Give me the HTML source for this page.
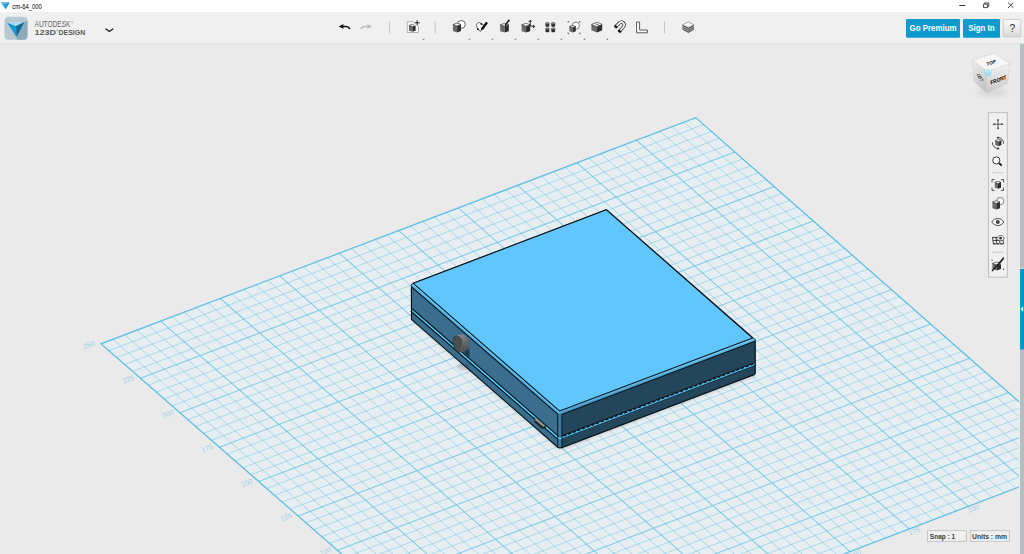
<!DOCTYPE html>
<html><head><meta charset="utf-8"><title>cm-64_000</title>
<style>
html,body{margin:0;padding:0;background:#eaeaea;overflow:hidden;font-family:"Liberation Sans",sans-serif;}
svg{position:absolute;left:0;top:0;display:block}
</style></head><body>
<svg width="1024" height="554" viewBox="0 0 1024 554" font-family="Liberation Sans, sans-serif">
<defs><filter id="blur1" x="-0.3" y="-0.3" width="1.6" height="1.6"><feGaussianBlur stdDeviation="1.2"/></filter><linearGradient id="btn" x1="0" y1="0" x2="0.3" y2="1"><stop offset="0" stop-color="#8a8d8f"/><stop offset="0.5" stop-color="#6d7072"/><stop offset="1" stop-color="#4e5153"/></linearGradient><linearGradient id="fl" gradientUnits="userSpaceOnUse" x1="486" y1="347" x2="483.4" y2="350"><stop offset="0" stop-color="#6ed2ff"/><stop offset="1" stop-color="#3f95c9"/></linearGradient><linearGradient id="fr" gradientUnits="userSpaceOnUse" x1="656" y1="374.6" x2="657.4" y2="378.4"><stop offset="0" stop-color="#72d4ff"/><stop offset="1" stop-color="#3a88ba"/></linearGradient><linearGradient id="vf" x1="0" y1="0" x2="1" y2="0"><stop offset="0" stop-color="#2d6488"/><stop offset="0.5" stop-color="#3f83ad"/><stop offset="1" stop-color="#2a5e80"/></linearGradient><linearGradient id="ncl" x1="0" y1="0" x2="0.3" y2="1"><stop offset="0" stop-color="#eeeeee"/><stop offset="1" stop-color="#c6c6c6"/></linearGradient><linearGradient id="ncf" x1="0" y1="0" x2="0" y2="1"><stop offset="0" stop-color="#f2f2f2"/><stop offset="1" stop-color="#c8c8c8"/></linearGradient><linearGradient id="hg" x1="0" y1="0" x2="0" y2="1"><stop offset="0" stop-color="#fbfbfb"/><stop offset="1" stop-color="#dadada"/></linearGradient><filter id="blur2" x="-0.2" y="-0.2" width="1.4" height="1.4"><feGaussianBlur stdDeviation="3"/></filter><clipPath id="vp"><rect x="0" y="44" width="1020" height="510"/></clipPath></defs>
<rect x="0" y="0" width="1024" height="554" fill="#eaeaea"/>

<g clip-path="url(#vp)">
<path d="M494.71,687.58 L1086.55,461.08 L695.73,117.64 L100.95,343.82Z" fill="#e7eef1"/>
<path d="M506.58,683.03 L112.88,339.29 M486.86,680.72 L1078.76,454.23 M518.45,678.49 L124.81,334.75 M479.01,673.87 L1070.96,447.38 M530.32,673.95 L136.74,330.21 M471.15,667.01 L1063.17,440.53 M542.19,669.41 L148.66,325.68 M463.30,660.15 L1055.37,433.68 M565.91,660.33 L172.51,316.61 M447.59,646.43 L1039.78,419.98 M577.78,655.79 L184.43,312.08 M439.73,639.58 L1031.98,413.12 M589.64,651.25 L196.35,307.54 M431.87,632.71 L1024.18,406.27 M601.50,646.71 L208.27,303.01 M424.01,625.85 L1016.38,399.41 M625.21,637.63 L232.10,293.95 M408.29,612.13 L1000.77,385.70 M637.07,633.10 L244.02,289.42 M400.43,605.26 L992.97,378.84 M648.92,628.56 L255.93,284.89 M392.56,598.40 L985.17,371.98 M660.77,624.02 L267.84,280.36 M384.70,591.53 L977.36,365.13 M684.47,614.95 L291.66,271.30 M368.97,577.80 L961.75,351.40 M696.32,610.42 L303.57,266.77 M361.10,570.93 L953.94,344.54 M708.17,605.89 L315.47,262.25 M353.23,564.06 L946.13,337.68 M720.02,601.35 L327.38,257.72 M345.36,557.19 L938.32,330.82 M743.70,592.29 L351.18,248.67 M329.62,543.45 L922.69,317.09 M755.55,587.76 L363.08,244.14 M321.75,536.58 L914.88,310.22 M767.39,583.22 L374.98,239.62 M313.88,529.71 L907.07,303.36 M779.22,578.69 L386.88,235.09 M306.01,522.83 L899.25,296.49 M802.90,569.63 L410.67,226.04 M290.25,509.08 L883.62,282.75 M814.73,565.10 L422.56,221.52 M282.38,502.21 L875.80,275.88 M826.57,560.58 L434.45,217.00 M274.50,495.33 L867.98,269.01 M838.40,556.05 L446.34,212.48 M266.62,488.45 L860.16,262.14 M862.06,546.99 L470.12,203.43 M250.86,474.69 L844.52,248.39 M873.89,542.47 L482.01,198.91 M242.98,467.81 L836.70,241.52 M885.71,537.94 L493.89,194.39 M235.10,460.93 L828.87,234.64 M897.54,533.42 L505.78,189.88 M227.22,454.05 L821.05,227.77 M921.18,524.37 L529.54,180.84 M211.45,440.28 L805.40,214.01 M933.00,519.84 L541.42,176.32 M203.56,433.40 L797.57,207.13 M944.82,515.32 L553.30,171.80 M195.67,426.51 L789.74,200.26 M956.64,510.80 L565.17,167.29 M187.78,419.63 L781.91,193.38 M980.27,501.75 L588.92,158.26 M172.01,405.85 L766.25,179.61 M992.09,497.23 L600.80,153.74 M164.12,398.96 L758.42,172.73 M1003.90,492.71 L612.67,149.23 M156.22,392.07 L750.59,165.85 M1015.71,488.19 L624.54,144.71 M148.33,385.18 L742.75,158.96 M1039.33,479.15 L648.27,135.69 M132.54,371.40 L727.08,145.19 M1051.14,474.63 L660.14,131.17 M124.65,364.51 L719.24,138.31 M1062.94,470.11 L672.00,126.66 M116.75,357.61 L711.41,131.42 M1074.75,465.60 L683.87,122.15 M108.85,350.72 L703.57,124.53" stroke="#2cb0e2" stroke-opacity="0.33" stroke-width="1" fill="none"/>
<path d="M554.05,664.87 L160.59,321.14 M455.44,653.29 L1047.58,426.83 M613.35,642.17 L220.19,298.48 M416.15,618.99 L1008.58,392.56 M672.62,619.49 L279.75,275.83 M376.83,584.67 L969.55,358.27 M731.86,596.82 L339.28,253.19 M337.49,550.32 L930.51,323.95 M791.06,574.16 L398.77,230.57 M298.13,515.96 L891.44,289.62 M850.23,551.52 L458.23,207.96 M258.74,481.57 L852.34,255.27 M909.36,528.89 L517.66,185.36 M219.33,447.17 L813.22,220.89 M968.46,506.27 L577.05,162.77 M179.90,412.74 L774.08,186.49 M1027.52,483.67 L636.41,140.20 M140.44,378.29 L734.92,152.08" stroke="#2cb0e2" stroke-opacity="0.55" stroke-width="1.05" fill="none"/>
<path d="M494.71,687.58 L1086.55,461.08 L695.73,117.64 L100.95,343.82Z" stroke="#2cb0e2" stroke-opacity="0.74" stroke-width="1.25" fill="none"/>
<g font-family="Liberation Sans, sans-serif" font-size="7.1" fill="#9dd2e9"><text x="325.5" y="553.8" transform="rotate(-21 325.5 551.5)" text-anchor="middle">100</text><text x="286.1" y="519.5" transform="rotate(-21 286.1 517.2)" text-anchor="middle">125</text><text x="246.7" y="485.1" transform="rotate(-21 246.7 482.8)" text-anchor="middle">150</text><text x="207.3" y="450.7" transform="rotate(-21 207.3 448.4)" text-anchor="middle">175</text><text x="167.9" y="416.2" transform="rotate(-21 167.9 413.9)" text-anchor="middle">200</text><text x="128.4" y="381.8" transform="rotate(-21 128.4 379.5)" text-anchor="middle">225</text><text x="89.0" y="347.3" transform="rotate(-21 89.0 345.0)" text-anchor="middle">250</text><text x="855.2" y="556.2" transform="rotate(-21 855.2 553.9)" text-anchor="middle">150</text><text x="914.4" y="533.6" transform="rotate(-21 914.4 531.3)" text-anchor="middle">175</text><text x="973.5" y="511.0" transform="rotate(-21 973.5 508.7)" text-anchor="middle">200</text></g>
</g>

<!-- BOX -->
<g id="box" stroke-linejoin="round">
  <!-- ground shadow -->
  <path d="M412,321 L559,449 L590,438 L520,400 Z" fill="#000" opacity="0.10" filter="url(#blur2)"/><path d="M562,449.6 L756,376.6 L754,372 L562,444 Z" fill="#000" opacity="0.10" filter="url(#blur1)"/>
  <!-- left face -->
  <path d="M411.4,285 L413.3,283.3 L558,413.6 L558.2,447.6 L411.6,319.6 Z" fill="#3a6d8e"/>
  <!-- right face -->
  <path d="M558.5,413.5 L755.2,339.9 L755.2,373.4 L754.2,374.6 L561.8,447.6 L559,447.9 Z" fill="#24465b"/>
  <!-- vertical fillet front -->
  <path d="M557.7,413.6 L562,414 L562,447 L560,448 L557.7,446.6 Z" fill="url(#vf)"/>
  <!-- seams -->
  <path d="M411.6,310 L557.9,437.6" stroke="#0a151c" stroke-width="3.8" fill="none"/>
  <path d="M411.6,310 L557.9,437.6 Q560,439 562,438" stroke="#5cd0ff" stroke-width="1.5" fill="none"/>
  <path d="M561.8,437.2 L755.2,363.8" stroke="#0a151c" stroke-width="3.4" fill="none"/>
  <path d="M561.8,437.9 L755.2,364.5" stroke="#55c2f5" stroke-width="1.1" fill="none"/>
  <path d="M561.8,437 L755.2,363.6" stroke="#55c2f5" stroke-width="1.2" stroke-dasharray="1.8 3.2" fill="none"/>
  <!-- silhouette -->
  <path d="M411.4,285 L413.3,283.3 L606.4,209.8 L755.2,339.9 L755.2,373.4 L754.2,374.6 L561.8,447.6 L559.6,448 L557.8,447.2 L411.6,319.6 Z" fill="none" stroke="#0b161d" stroke-width="1.25"/>
  <!-- fillet bands -->
  <path d="M413.3,283.3 L559.7,411.1 L557.7,414.1 L411.6,286.8 L411.5,285 Z" fill="url(#fl)"/>
  <path d="M559.7,411.1 L752.6,338 L755.2,339.9 L755,341.3 L561.8,414.4 L557.7,414.1 Z" fill="url(#fr)"/>
  <path d="M411.6,286.8 L557.7,414.1" stroke="#0b161d" stroke-width="1.1" fill="none"/>
  <path d="M561.8,414.4 L755,341.3" stroke="#0b161d" stroke-width="1.1" fill="none"/>
  <path d="M557.7,414 L557.7,446.6 M562,414.4 L562,447" stroke="#0b161d" stroke-width="0.9" fill="none"/>
  <!-- top face -->
  <path d="M413.3,283.3 L606.4,209.8 L752.6,338 L559.7,411.1 Z" fill="#61c6fd" stroke="#0b161d" stroke-width="1.05"/>
  <!-- usb port -->
  <path d="M534.4,417.2 L546.4,426.4 L545,428.8 L541.4,428.6 L534.2,421.8 Z" fill="#262626"/>
  <path d="M535,417.7 L545.2,425.7 L543.4,426.7 L535.2,420 Z" fill="#9c9c9c"/>
  <!-- button -->
  <ellipse cx="463" cy="367" rx="6" ry="3.2" fill="#000" opacity="0.13" filter="url(#blur1)"/>
  <path d="M464.6,350.6 L469.4,348.4 L469.4,357.6 L465,353.6 Z" fill="#1d3b4e"/>
  <path d="M455.4,336.8 C458,333.4 466.4,333.2 468.8,340.4 L469.3,349 L461,352.6 Z" fill="url(#btn)"/>
  <ellipse cx="458" cy="343.9" rx="4.7" ry="8.4" transform="rotate(-16 458 343.9)" fill="#4b4e50" stroke="#2c2e30" stroke-width="0.6"/>
  <path d="M461.4,336.8 C463.4,340.6 463.4,347.6 460.6,351.6" stroke="#7d8183" stroke-width="0.7" fill="none"/>
</g>
<!-- RIGHT STRIP -->
<rect x="1019" y="44" width="1" height="510" fill="#ededed"/><rect x="1020" y="44" width="4" height="510" fill="#b5bebe"/>
<rect x="1020" y="268.4" width="4" height="0.8" fill="#e6dcd8"/><rect x="1020" y="269" width="4" height="80.5" fill="#0099cc"/>
<path d="M1023.2,306.6 L1020.4,309 L1023.2,311.4 Z" fill="#fff"/>
<!-- TITLE BAR -->
<rect x="0" y="0" width="1024" height="12" fill="#ffffff"/>
<path d="M1.1,2.2 L9.8,2.2 L5.6,9.3 Z" fill="#1d8fc6"/>
<path d="M1.1,2.2 L5.4,4 L5.6,9.3 Z" fill="#2fb0e6"/><path d="M1.1,2.2 L9.8,2.2 L5.4,4 Z" fill="#7fd0ee"/>
<text x="12.3" y="8.7" font-size="6.8" fill="#000" textLength="29.6" lengthAdjust="spacingAndGlyphs">cm-64_000</text>
<path d="M959.3,5.5 H965.3" stroke="#222" stroke-width="0.9" fill="none"/>
<path d="M983.5,4.1 H987.6 V7.6 H983.5 Z M984.7,4.1 V2.9 H988.8 V6.4 H987.6" stroke="#222" stroke-width="0.8" fill="none"/>
<path d="M1008,2.7 L1013.4,7.9 M1013.4,2.7 L1008,7.9" stroke="#222" stroke-width="0.85" fill="none"/>
<!-- TOOLBAR -->
<rect x="0" y="12" width="1024" height="31" fill="#f0f0f0"/>
<rect x="0" y="42" width="1024" height="1" fill="#f2f2f2"/><rect x="0" y="43" width="1024" height="1" fill="#dedede"/><rect x="0" y="44" width="1019" height="1" fill="#e5e5e5"/>
<!-- logo -->
<rect x="4.5" y="16.8" width="23" height="23" rx="4" fill="#b8c8d0"/>
<path d="M27.5,20 L27.5,35.8 Q27.5,39.8 23.5,39.8 L17,39.8 L14,31 Z" fill="#8eaaba"/>
<path d="M7,22.6 L16,26 L16.6,37 Z" fill="#199ad8"/>
<path d="M7,22.6 L24.4,22 L16,26 Z" fill="#a9dcf1"/>
<path d="M24.4,22 L16,26 L16.6,37 Z" fill="#0f6c9a"/>
<text x="34.5" y="27" font-size="8.2" fill="#666" textLength="36" lengthAdjust="spacingAndGlyphs">AUTODESK</text>
<text x="71" y="23.6" font-size="3" fill="#6a6a6a">®</text>
<text x="34.5" y="35.1" font-size="8.1" font-weight="bold" fill="#5a5a5a" textLength="21.5" lengthAdjust="spacingAndGlyphs">123D</text>
<text x="56.2" y="31.6" font-size="3" fill="#5a5a5a">®</text>
<text x="58.6" y="35.1" font-size="8.1" font-weight="bold" fill="#5a5a5a" textLength="26.6" lengthAdjust="spacingAndGlyphs">DESIGN</text>
<path d="M106,29 L109.4,31.6 L112.8,29" stroke="#222" stroke-width="1.3" fill="none" stroke-linecap="round" stroke-linejoin="round"/>
<!-- buttons right -->
<rect x="906" y="19" width="54" height="18.8" rx="1.2" fill="#0d9bce"/>
<text x="933" y="31.2" font-size="8.2" font-weight="bold" fill="#fff" text-anchor="middle" textLength="47" lengthAdjust="spacingAndGlyphs">Go Premium</text>
<rect x="963" y="19" width="37" height="18.8" rx="1.2" fill="#0d9bce"/>
<text x="981.4" y="31.2" font-size="8.2" font-weight="bold" fill="#fff" text-anchor="middle" textLength="26.4" lengthAdjust="spacingAndGlyphs">Sign In</text>
<rect x="1003.3" y="19.5" width="17.5" height="17.3" rx="1" fill="url(#hg)" stroke="#c4c4c4" stroke-width="0.8"/>
<text x="1012.3" y="32" font-size="10.2" fill="#2a2a2a" text-anchor="middle">?</text>
<!-- SNAP/UNITS -->
<rect x="927.4" y="530.7" width="39" height="10.6" fill="#f0f0f0" stroke="#bdbdbd" stroke-width="0.8"/>
<text x="929.8" y="538.7" font-size="7.5" font-weight="bold" fill="#3c3c3c" textLength="25.4" lengthAdjust="spacingAndGlyphs">Snap : 1</text>
<rect x="970.3" y="530.7" width="39" height="10.6" fill="#f0f0f0" stroke="#bdbdbd" stroke-width="0.8"/>
<text x="972" y="538.7" font-size="7.5" font-weight="bold" fill="#3c3c3c" textLength="35" lengthAdjust="spacingAndGlyphs">Units : mm</text>
<g id="tb"><path d="M338.7,26.4 L343.4,24 L343.4,28.8 Z" fill="#111"/><path d="M343,26.4 H346.4 C348.2,26.4 349,27.4 349.7,28.6" stroke="#111" stroke-width="1.5" fill="none" stroke-linecap="round"/><path d="M372,26.4 L367.3,24 L367.3,28.8 Z" fill="#bcbcbc"/><path d="M367.7,26.4 H364.3 C362.5,26.4 361.7,27.4 361,28.6" stroke="#bcbcbc" stroke-width="1.5" fill="none" stroke-linecap="round"/><path d="M389.5,21 V33.3" stroke="#c6c6c6" stroke-width="1"/><path d="M435.2,21 V33.3" stroke="#c6c6c6" stroke-width="1"/><path d="M664.5,21 V33.3" stroke="#c6c6c6" stroke-width="1"/><rect x="407.2" y="21.8" width="11.2" height="10.6" fill="#f6f6f6" stroke="#9a9a9a" stroke-width="0.7"/><path d="M409.00,25.51 L412.43,26.62 L412.43,31.80 L409.00,30.69 Z" fill="#6a6a6a"/><path d="M412.43,26.62 L415.60,25.51 L415.60,30.69 L412.43,31.80 Z" fill="#2e2e2e"/><path d="M409.00,25.51 L412.43,24.40 L415.60,25.51 L412.43,26.62 Z" fill="#fafafa" stroke="#222" stroke-width="0.60" stroke-linejoin="round"/><rect x="414" y="19.6" width="6" height="6" fill="#f2f2f2"/><path d="M414.6,22.8 H419.6 M417.1,20.2 V25.4" stroke="#111" stroke-width="0.9"/><path d="M424.30,37.90 L424.30,39.90 L422.30,39.90 Z" fill="#8a8a8a"/><circle cx="461.4" cy="24.4" r="3.9" fill="#fff" stroke="#222" stroke-width="0.7"/><path d="M452.90,24.51 L457.11,25.92 L457.11,32.50 L452.90,31.09 Z" fill="#6a6a6a"/><path d="M457.11,25.92 L461.00,24.51 L461.00,31.09 L457.11,32.50 Z" fill="#2e2e2e"/><path d="M452.90,24.51 L457.11,23.10 L461.00,24.51 L457.11,25.92 Z" fill="#fafafa" stroke="#222" stroke-width="0.60" stroke-linejoin="round"/><path d="M470.10,37.90 L470.10,39.90 L468.10,39.90 Z" fill="#8a8a8a"/><path d="M477.8,29.2 C475.6,25.6 476.6,22.6 479,22.6 C480.4,22.6 481,23.2 481.3,23.8 C482.6,24.8 483.6,25 484.4,25.4 C483.6,28 482,30.4 480.4,31.6 Z" fill="#fff" stroke="#222" stroke-width="0.7"/><circle cx="481.3" cy="23.9" r="0.9" fill="#111"/><circle cx="477.9" cy="29.2" r="0.9" fill="#111"/><path d="M487,22.4 L482.2,29" stroke="#111" stroke-width="2.4"/><path d="M482.9,28 L480.6,31.2 L481.2,28" fill="#111"/><path d="M493.10,37.90 L493.10,39.90 L491.10,39.90 Z" fill="#8a8a8a"/><path d="M500.20,24.78 L504.67,26.16 L504.67,32.60 L500.20,31.22 Z" fill="#6a6a6a"/><path d="M504.67,26.16 L508.80,24.78 L508.80,31.22 L504.67,32.60 Z" fill="#2e2e2e"/><path d="M500.20,24.78 L504.67,23.40 L508.80,24.78 L504.67,26.16 Z" fill="#fafafa" stroke="#222" stroke-width="0.60" stroke-linejoin="round"/><path d="M509.4,19.8 L505,25.6" stroke="#111" stroke-width="1.5"/><path d="M516.10,37.90 L516.10,39.90 L514.10,39.90 Z" fill="#8a8a8a"/><path d="M521.60,24.78 L526.07,26.16 L526.07,32.60 L521.60,31.22 Z" fill="#6a6a6a"/><path d="M526.07,26.16 L530.20,24.78 L530.20,31.22 L526.07,32.60 Z" fill="#2e2e2e"/><path d="M521.60,24.78 L526.07,23.40 L530.20,24.78 L526.07,26.16 Z" fill="#fafafa" stroke="#222" stroke-width="0.60" stroke-linejoin="round"/><path d="M530.2,26 V20.6 M528.8,22 L530.2,20.2 L531.6,22 M530.2,26 L534.4,26.4 M533,25 L534.8,26.4 L533,27.8" stroke="#111" stroke-width="0.9" fill="none"/><path d="M539.10,37.90 L539.10,39.90 L537.10,39.90 Z" fill="#8a8a8a"/><rect x="545.5" y="23.2" width="3.8" height="3.6" rx="1" fill="#2c2c2c"/><ellipse cx="547.4" cy="23.4" rx="1.9" ry="1" fill="#888" stroke="#222" stroke-width="0.4"/><rect x="551.3" y="23.2" width="3.8" height="3.6" rx="1" fill="#2c2c2c"/><ellipse cx="553.2" cy="23.4" rx="1.9" ry="1" fill="#888" stroke="#222" stroke-width="0.4"/><rect x="545.5" y="28.6" width="3.8" height="3.6" rx="1" fill="#2c2c2c"/><ellipse cx="547.4" cy="28.8" rx="1.9" ry="1" fill="#888" stroke="#222" stroke-width="0.4"/><rect x="551.3" y="28.6" width="3.8" height="3.6" rx="1" fill="#2c2c2c"/><ellipse cx="553.2" cy="28.8" rx="1.9" ry="1" fill="#888" stroke="#222" stroke-width="0.4"/><path d="M562.10,37.90 L562.10,39.90 L560.10,39.90 Z" fill="#8a8a8a"/><circle cx="575.8" cy="25.6" r="3.6" fill="#fff" stroke="#333" stroke-width="0.6"/><path d="M569.40,26.45 L572.73,27.50 L572.73,32.40 L569.40,31.35 Z" fill="#6a6a6a"/><path d="M572.73,27.50 L575.80,26.45 L575.80,31.35 L572.73,32.40 Z" fill="#2e2e2e"/><path d="M569.40,26.45 L572.73,25.40 L575.80,26.45 L572.73,27.50 Z" fill="#fafafa" stroke="#222" stroke-width="0.60" stroke-linejoin="round"/><path d="M568,22.6 V21.6 H569 M579,21.6 H580 V22.6 M568,32.6 V33.6 H569 M579,33.6 H580 V32.6" stroke="#222" stroke-width="0.7" fill="none"/><path d="M585.10,37.90 L585.10,39.90 L583.10,39.90 Z" fill="#8a8a8a"/><path d="M591.40,24.44 L597.02,26.69 L597.02,32.40 L591.40,30.16 Z" fill="#6a6a6a"/><path d="M597.02,26.69 L602.20,24.44 L602.20,30.16 L597.02,32.40 Z" fill="#2e2e2e"/><path d="M591.40,24.44 L597.02,22.20 L602.20,24.44 L597.02,26.69 Z" fill="#fafafa" stroke="#222" stroke-width="0.60" stroke-linejoin="round"/><path d="M595.6,23.8 L600.4,26" stroke="#222" stroke-width="0.7"/><path d="M608.10,37.90 L608.10,39.90 L606.10,39.90 Z" fill="#8a8a8a"/><path d="M615.4,27 L619.6,22.8 C622,20.8 625.6,23.6 623.6,26.6 L619.8,31.2" fill="none" stroke="#222" stroke-width="3.2"/><path d="M615.4,27 L619.6,22.8 C622,20.8 625.6,23.6 623.6,26.6 L619.8,31.2" fill="none" stroke="#f4f4f4" stroke-width="1.8"/><path d="M614.6,25.6 L616.9,27.9 M618.2,30.2 L620.8,32.4" stroke="#111" stroke-width="2.2"/><path d="M636.6,22 H639.6 V30 H647.4 V32.8 H636.6 Z" fill="#fafafa" stroke="#333" stroke-width="0.8"/><path d="M682.4,24.8 L688.4,21.8 L694,24.8 L694,29.8 L688.4,33 L682.4,29.8 Z" fill="#5c5c5c"/><path d="M682.4,24.8 L688.4,21.8 L694,24.8 L688.4,27.4 Z" fill="#f4f4f4" stroke="#888" stroke-width="0.5"/><path d="M682.4,26.6 L688.4,29.4 L694,26.6 M682.4,28.4 L688.4,31.2 L694,28.4" stroke="#c8c8c8" stroke-width="0.6" fill="none"/></g><g id="rp"><rect x="988.5" y="112.6" width="18.8" height="164.6" fill="#f0f0f0" stroke="#bfbfbf" stroke-width="1"/><path d="M998,119.2 V129.2 M993,124.2 H1003" stroke="#222" stroke-width="0.7"/><path d="M997,120.6 L998,119 L999,120.6 Z M997,127.8 L998,129.4 L999,127.8 Z M994.4,123.2 L992.8,124.2 L994.4,125.2 Z M1001.6,123.2 L1003.2,124.2 L1001.6,125.2 Z" fill="#222"/><path d="M995.20,140.72 L998.42,141.84 L998.42,146.20 L995.20,145.08 Z" fill="#6a6a6a"/><path d="M998.42,141.84 L1001.40,140.72 L1001.40,145.08 L998.42,146.20 Z" fill="#2e2e2e"/><path d="M995.20,140.72 L998.42,139.60 L1001.40,140.72 L998.42,141.84 Z" fill="#fafafa" stroke="#222" stroke-width="0.60" stroke-linejoin="round"/><path d="M997.4,137.6 A5.6,5.6 0 0 1 1003.6,143.6 M998.8,148.5 A5.6,5.6 0 0 1 992.5,142.4" stroke="#222" stroke-width="0.8" fill="none"/><path d="M996.6,137.8 L998.8,136.4 L998.6,138.9 Z M999.6,148.3 L997.4,149.7 L997.6,147.2 Z" fill="#222"/><circle cx="996.3" cy="160.4" r="3.6" fill="#fafafa" stroke="#222" stroke-width="0.9"/><path d="M999.2,163.2 L1001.8,165.6" stroke="#111" stroke-width="1.9"/><path d="M991.6,172.7 H1003.6" stroke="#c4c4c4" stroke-width="0.8"/><path d="M994.80,182.34 L998.02,183.48 L998.02,188.80 L994.80,187.66 Z" fill="#6a6a6a"/><path d="M998.02,183.48 L1001.00,182.34 L1001.00,187.66 L998.02,188.80 Z" fill="#2e2e2e"/><path d="M994.80,182.34 L998.02,181.20 L1001.00,182.34 L998.02,183.48 Z" fill="#fafafa" stroke="#222" stroke-width="0.60" stroke-linejoin="round"/><path d="M992,182.4 V179.6 H994.6 M1001,179.6 H1003.6 V182.4 M992,187.6 V190.4 H994.6 M1001,190.4 H1003.6 V187.6" stroke="#222" stroke-width="0.75" fill="none"/><circle cx="1000.2" cy="201" r="3.7" fill="#fff" stroke="#333" stroke-width="0.6"/><path d="M992.40,201.95 L996.35,203.30 L996.35,209.60 L992.40,208.25 Z" fill="#6a6a6a"/><path d="M996.35,203.30 L1000.00,201.95 L1000.00,208.25 L996.35,209.60 Z" fill="#2e2e2e"/><path d="M992.40,201.95 L996.35,200.60 L1000.00,201.95 L996.35,203.30 Z" fill="#fafafa" stroke="#222" stroke-width="0.60" stroke-linejoin="round"/><path d="M991.8,222 C994.4,217.4 1001.2,217.4 1003.8,222 C1001.2,226.6 994.4,226.6 991.8,222 Z" fill="#fafafa" stroke="#222" stroke-width="0.8"/><circle cx="997.8" cy="222" r="2" fill="#444"/><path d="M992.4,237.4 H998 M992.8,240.5 H1003.4" stroke="#222" stroke-width="0.8" fill="none"/><path d="M993.2,243.9 H1004" stroke="#222" stroke-width="1.2" fill="none" stroke-dasharray="2.6 0.9"/><path d="M992.6,237 L993.4,244 M995.9,237 L996.7,244 M999.5,240.4 L1000.1,244 M1003,240.4 L1003.8,244" stroke="#222" stroke-width="0.8" fill="none"/><path d="M996.8,238.4 C998.6,234.6 1002.4,234.6 1004.2,238.4 C1002.4,241.6 998.6,241.6 996.8,238.4 Z" fill="#fcfcfc" stroke="#222" stroke-width="0.7"/><circle cx="1000.5" cy="238.2" r="1.4" fill="#333"/><path d="M991.6,252.3 H1003.6" stroke="#c4c4c4" stroke-width="0.8"/><path d="M992.40,263.43 L996.87,264.86 L996.87,270.40 L992.40,268.97 Z" fill="#6a6a6a"/><path d="M996.87,264.86 L1001.00,263.43 L1001.00,268.97 L996.87,270.40 Z" fill="#2e2e2e"/><path d="M992.40,263.43 L996.87,262.00 L1001.00,263.43 L996.87,264.86 Z" fill="#fafafa" stroke="#222" stroke-width="0.60" stroke-linejoin="round"/><path d="M1003.6,258.2 L999.6,263.8" stroke="#e8e8e8" stroke-width="2.6"/><path d="M1003.6,258.2 L999.6,263.8" stroke="#555" stroke-width="1.2"/><path d="M1003.9,257.8 L992,271" stroke="#1a1a1a" stroke-width="1.3"/><rect x="991.6" y="259.8" width="1" height="1" fill="#222"/><rect x="1003" y="268.9" width="1" height="1" fill="#222"/></g><g id="nc"><ellipse cx="992" cy="92" rx="15" ry="5" fill="#000" opacity="0.07" filter="url(#blur2)"/><path d="M972.5,60.1 L987.1,71.4 L986.5,93.6 L974.1,81.7 Z" fill="url(#ncl)"/><path d="M987.1,71.4 L1010,63.9 L1007.6,83.9 L986.5,93.6 Z" fill="url(#ncf)"/><path d="M972.5,60.1 L994.7,53 L1010,63.9 L987.1,71.4 Z" fill="#f6f6f6" stroke="#b4b4b4" stroke-width="0.5" stroke-dasharray="2 1"/><path d="M987.1,71.4 L986.5,93.6 M972.5,60.1 L974.1,81.7 M1010,63.9 L1007.6,83.9" stroke="#c2c2c2" stroke-width="0.5" stroke-dasharray="2 1"/><path d="M984,70.2 L988,68.8 L991.4,71.6 L991.2,75 L987.4,77 L984.2,74.2 Z" fill="#a3dcf2"/><path d="M984,70.2 L988,68.8 L991.4,71.6 L987.4,73 Z" fill="#bfe8f7"/><text x="991.2" y="64.4" font-size="4.7" font-weight="bold" font-style="italic" fill="#000" text-anchor="middle" transform="rotate(-19 991.2 63)">TOP</text><text x="998.4" y="81.6" font-size="5.3" font-weight="bold" font-style="italic" fill="#000" text-anchor="middle" transform="rotate(-20 998.4 80)" textLength="17" lengthAdjust="spacingAndGlyphs">FRONT</text><text x="0" y="1.5" font-size="4.6" font-weight="bold" fill="#111" text-anchor="middle" transform="translate(980 77.6) rotate(60) skewX(-14)" textLength="8" lengthAdjust="spacingAndGlyphs">LEFT</text></g>
</svg>
</body></html>
